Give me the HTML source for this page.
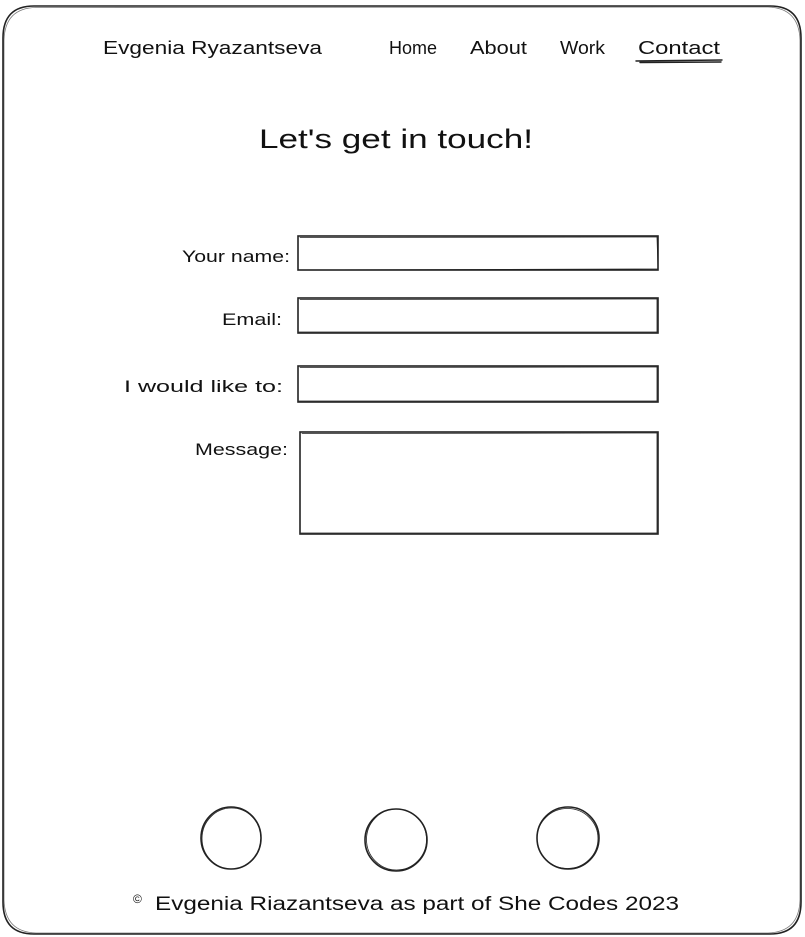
<!DOCTYPE html>
<html><head><meta charset="utf-8"><style>
html,body{margin:0;padding:0;background:#fff;width:805px;height:937px;overflow:hidden}
svg{display:block}
text{font-family:"Liberation Sans",sans-serif;fill:#111}
</style></head><body>
<svg width="805" height="937" viewBox="0 0 805 937" xmlns="http://www.w3.org/2000/svg">
<g fill="none" stroke="#222" stroke-width="1.6" stroke-linecap="round">
<path d="M34 6 L770 6 Q801 6 801 38 L801 902 Q801 934 770 934 L34 934 Q3 934 3 902 L3 38 Q3 6 34 6 Z"/>
<path d="M36 7.5 L768 7 Q799 8 800 40 L800 900 Q799 932 768 933 L36 933 Q5 932 4 900 L4 40 Q5 8 36 7.5" stroke-width="0.8" opacity="0.6"/>
<path d="M636 61 L722 60 M640 62.5 L721 62" stroke-width="1.4"/>
<rect x="298" y="236" width="360" height="34"/>
<path d="M300 237.5 L657 237 L658 269 L299 270" stroke-width="0.8"/>
<rect x="298" y="298" width="360" height="35"/>
<path d="M300 299.5 L657 299 L657 332 L299 332" stroke-width="0.8"/>
<rect x="298" y="366" width="360" height="36"/>
<path d="M300 367.5 L657 367 L657 401 L299 401" stroke-width="0.8"/>
<rect x="300" y="432" width="358" height="102"/>
<path d="M302 433.5 L657 433 L657 533 L301 533" stroke-width="0.8"/>
<ellipse cx="231" cy="838" rx="30" ry="31"/>
<ellipse cx="231.5" cy="838.5" rx="29.5" ry="30.5" stroke-width="0.8"/>
<ellipse cx="396" cy="840" rx="31" ry="31"/>
<ellipse cx="396.5" cy="839.5" rx="30" ry="30.5" stroke-width="0.8"/>
<ellipse cx="568" cy="838" rx="31" ry="31"/>
<ellipse cx="567.5" cy="838.5" rx="30.5" ry="30" stroke-width="0.8"/>
</g>
<text x="103" y="54" font-size="18" textLength="219" lengthAdjust="spacingAndGlyphs">Evgenia Ryazantseva</text>
<text x="389" y="54" font-size="18" textLength="48" lengthAdjust="spacingAndGlyphs">Home</text>
<text x="470" y="54" font-size="18" textLength="57" lengthAdjust="spacingAndGlyphs">About</text>
<text x="560" y="54" font-size="18" textLength="45" lengthAdjust="spacingAndGlyphs">Work</text>
<text x="638" y="54" font-size="18" textLength="82" lengthAdjust="spacingAndGlyphs">Contact</text>
<text x="259" y="148" font-size="27" textLength="274" lengthAdjust="spacingAndGlyphs">Let's get in touch!</text>
<text x="182" y="262" font-size="17" textLength="108" lengthAdjust="spacingAndGlyphs">Your name:</text>
<text x="222" y="325" font-size="17" textLength="60" lengthAdjust="spacingAndGlyphs">Email:</text>
<text x="124" y="392" font-size="17" textLength="159" lengthAdjust="spacingAndGlyphs">I would like to:</text>
<text x="195" y="455" font-size="17" textLength="93" lengthAdjust="spacingAndGlyphs">Message:</text>
<text x="133" y="903" font-size="12">©</text>
<text x="155" y="910" font-size="19" textLength="524" lengthAdjust="spacingAndGlyphs">Evgenia Riazantseva as part of She Codes 2023</text>
</svg>
</body></html>
